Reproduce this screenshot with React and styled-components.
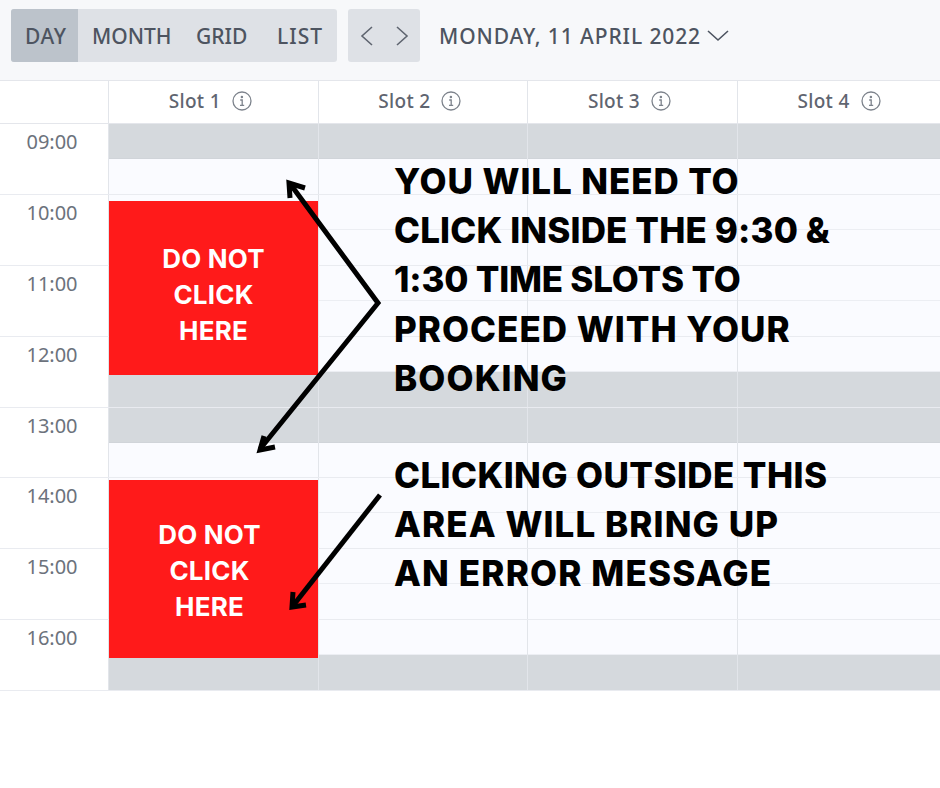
import React from 'react';
import styled, { createGlobalStyle } from 'styled-components';

const GlobalStyle = createGlobalStyle`
    html, body {
        margin: 0;
        background: #fff;
        font-family: 'Noto Sans', sans-serif;
    }
`;

const Page = styled.div`
    position: relative;
    width: 940px;
    height: 788px;
    overflow: hidden;
    background: #fff;
`;

const Toolbar = styled.header`
    height: 81px;
    box-sizing: border-box;
    display: flex;
    align-items: flex-start;
    padding: 9px 0 0 11px;
    background: #f7f8fa;
    border-bottom: 1px solid #e4e6eb;
`;

const ButtonGroup = styled.div`
    height: 53px;
    display: flex;
    align-items: stretch;
    background: #dee1e6;
    border-radius: 3px;
    overflow: hidden;
    margin-right: 11px;
`;

const ViewButton = styled.div`
    display: flex;
    align-items: center;
    width: ${({ $width }) => $width}px;
    box-sizing: border-box;
    padding-left: ${({ $pad }) => $pad}px;
    background: ${({ $active }) => ($active ? '#bcc3cb' : 'transparent')};
    color: #4d5460;
    font-size: 21px;
    font-weight: 500;
    letter-spacing: ${({ $spacing }) => $spacing || 0}px;
`;

const NavGroup = styled(ButtonGroup)`
    width: 72px;
    margin-right: 19px;
    align-items: center;
    justify-content: center;
    gap: 23px;
    color: #5f6570;
`;

const DateLabel = styled.div`
    height: 53px;
    display: flex;
    align-items: center;
    gap: 6px;
    color: #4d5460;
    font-size: 21px;
    font-weight: 500;
    letter-spacing: 0.9px;
`;

const Columns = styled.div`
    display: grid;
    grid-template-columns: 108px repeat(4, 209.6px);
`;

const HeaderRow = styled(Columns)`
    height: 43px;
    border-bottom: 1px solid #e4e6eb;
    box-sizing: border-box;
`;

const HeaderCell = styled.div`
    display: flex;
    align-items: center;
    justify-content: center;
    gap: 11px;
    padding: 0 6px 3px 0;
    border-left: 1px solid #e2e5ea;
    box-sizing: border-box;
    color: #5f6570;
    font-size: 19px;
    font-weight: 500;
    letter-spacing: 0.3px;
`;

const Corner = styled.div``;

const HourRow = styled(Columns)`
    height: 70.9px;
    box-sizing: border-box;
    border-bottom: 1px solid #e9ebf0;
`;

const TimeCell = styled.div`
    box-sizing: border-box;
    padding-top: 5px;
    text-align: center;
    padding-right: 4px;
    color: #6c727c;
    font-size: 20px;
    line-height: 26px;
`;

const SlotCell = styled.div`
    display: grid;
    grid-template-rows: 1fr 1fr;
    border-left: 1px solid #e2e5ea;
    box-sizing: border-box;
`;

const HalfCell = styled.div`
    background: ${({ $closed }) => ($closed ? '#d5d9dd' : '#fafbff')};
    border-bottom: 1px solid ${({ $closed }) => ($closed ? '#d0d4d9' : '#eceef3')};
    &:last-child {
        border-bottom: 0;
    }
`;

const Blocked = styled.div`
    position: absolute;
    left: 109px;
    top: ${({ $top }) => $top}px;
    width: 209px;
    height: ${({ $height }) => $height}px;
    box-sizing: border-box;
    padding-top: ${({ $padTop }) => $padTop}px;
    padding-right: ${({ $padRight }) => $padRight}px;
    background: #ff1a1a;
    color: #fff;
    text-align: center;
    font-family: 'Inter', sans-serif;
    font-size: 26px;
    font-weight: 700;
    line-height: 36px;
    letter-spacing: 0.2px;
`;

const Note = styled.div`
    position: absolute;
    left: 394px;
    top: ${({ $top }) => $top}px;
    color: #000;
    font-family: 'Inter', sans-serif;
    font-size: 35px;
    font-weight: 800;
    line-height: 49.2px;
    white-space: nowrap;
`;

const NoteLine = styled.div`
    letter-spacing: ${({ $spacing }) => $spacing}px;
`;

const ArrowLayer = styled.svg`
    position: absolute;
    left: 0;
    top: 0;
    pointer-events: none;
`;

const Chevron = ({ points, width, height }) => (
    <svg width={width} height={height} viewBox={`0 0 ${width} ${height}`} fill="none" stroke="currentColor" strokeWidth="1.6">
        <polyline points={points} />
    </svg>
);

const InfoIcon = () => (
    <svg width="20" height="20" viewBox="0 0 20 20" fill="none" stroke="#7d838c" strokeWidth="1.3">
        <circle cx="10" cy="10" r="9" />
        <path d="M8.2 9h2v5.2M8 14.4h4.2" />
        <circle cx="9.9" cy="6" r="0.6" fill="#7d838c" />
    </svg>
);

const HOURS = [
    { time: '09:00', closed: [true, false] },
    { time: '10:00', closed: [false, false] },
    { time: '11:00', closed: [false, false] },
    { time: '12:00', closed: [false, true] },
    { time: '13:00', closed: [true, false] },
    { time: '14:00', closed: [false, false] },
    { time: '15:00', closed: [false, false] },
    { time: '16:00', closed: [false, true] },
];

const SLOTS = ['Slot 1', 'Slot 2', 'Slot 3', 'Slot 4'];

const NOTE_TOP = [
    { text: 'YOU WILL NEED TO', spacing: 0.9 },
    { text: 'CLICK INSIDE THE 9:30 &', spacing: 0.14 },
    { text: '1:30 TIME SLOTS TO', spacing: -0.2 },
    { text: 'PROCEED WITH YOUR', spacing: 1 },
    { text: 'BOOKING', spacing: 1.1 },
];

const NOTE_BOTTOM = [
    { text: 'CLICKING OUTSIDE THIS', spacing: 0.4 },
    { text: 'AREA WILL BRING UP', spacing: 1.07 },
    { text: 'AN ERROR MESSAGE', spacing: 1.15 },
];

const App = () => (
    <Page>
        <GlobalStyle />
        <Toolbar>
            <ButtonGroup>
                <ViewButton $active $width={67} $pad={14} $spacing={0.6}>DAY</ViewButton>
                <ViewButton $width={104} $pad={14}>MONTH</ViewButton>
                <ViewButton $width={81} $pad={14}>GRID</ViewButton>
                <ViewButton $width={74} $pad={14} $spacing={1}>LIST</ViewButton>
            </ButtonGroup>
            <NavGroup>
                <Chevron width={13} height={20} points="12,1 2,10 12,19" />
                <Chevron width={13} height={20} points="1,1 11,10 1,19" />
            </NavGroup>
            <DateLabel>
                MONDAY, 11 APRIL 2022
                <Chevron width={22} height={12} points="1,1 11,10 21,1" />
            </DateLabel>
        </Toolbar>
        <HeaderRow>
            <Corner />
            {SLOTS.map((slot) => (
                <HeaderCell key={slot}>
                    {slot}
                    <InfoIcon />
                </HeaderCell>
            ))}
        </HeaderRow>
        {HOURS.map((hour) => (
            <HourRow key={hour.time}>
                <TimeCell>{hour.time}</TimeCell>
                {SLOTS.map((slot) => (
                    <SlotCell key={slot}>
                        <HalfCell $closed={hour.closed[0]} />
                        <HalfCell $closed={hour.closed[1]} />
                    </SlotCell>
                ))}
            </HourRow>
        ))}
        <Blocked $top={201} $height={174} $padTop={40} $padRight={0}>DO NOT<br />CLICK<br />HERE</Blocked>
        <Blocked $top={480} $height={178} $padTop={37} $padRight={8}>DO NOT<br />CLICK<br />HERE</Blocked>
        <Note $top={157}>
            {NOTE_TOP.map((line) => (
                <NoteLine key={line.text} $spacing={line.spacing}>{line.text}</NoteLine>
            ))}
        </Note>
        <Note $top={451}>
            {NOTE_BOTTOM.map((line) => (
                <NoteLine key={line.text} $spacing={line.spacing}>{line.text}</NoteLine>
            ))}
        </Note>
        <ArrowLayer width="940" height="788" fill="none" stroke="#000" strokeWidth="5">
            <path d="M291 185L378 303L260 449" />
            <path d="M290 198L289 183L305 188" />
            <path d="M264 436L260 450L275 447" />
            <path d="M380 495L292 607" />
            <path d="M293 592L292 607L306 605" />
        </ArrowLayer>
    </Page>
);

export default App;
